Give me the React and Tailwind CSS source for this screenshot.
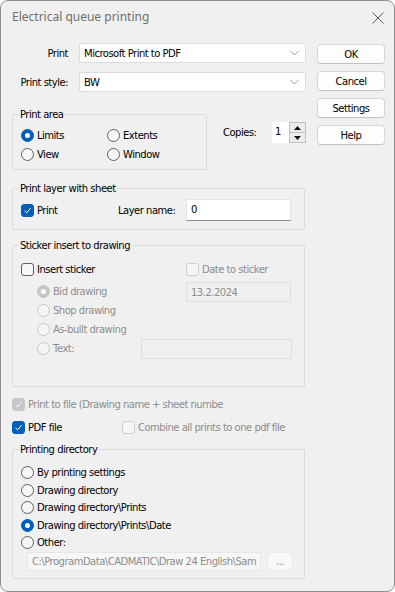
import React from 'react'

function Radio({ checked, disabled, label, className = '' }) {
  let circle = 'border-[#5f5f5f] bg-[#f7f7f7]'
  if (checked && !disabled) circle = 'border-[#005fb8] bg-[#005fb8]'
  if (checked && disabled) circle = 'border-[#c6c6c6] bg-[#c6c6c6]'
  if (!checked && disabled) circle = 'border-[#c6c6c6] bg-[#f5f5f5]'
  return (
    <div className={`flex items-center ${className}`}>
      <span
        className={`w-[13px] h-[13px] shrink-0 rounded-full border flex items-center justify-center ${circle}`}
      >
        {checked && <span className="w-[5px] h-[5px] rounded-full bg-white" />}
      </span>
      <span className={`ml-[3px] whitespace-nowrap ${disabled ? 'text-[#8d8d8d]' : ''}`}>
        {label}
      </span>
    </div>
  )
}

function Check({ checked, disabled, label, className = '' }) {
  let box = 'border-[#5f5f5f] bg-[#f7f7f7]'
  if (checked && !disabled) box = 'border-[#005fb8] bg-[#005fb8]'
  if (checked && disabled) box = 'border-[#c6c6c6] bg-[#c6c6c6]'
  if (!checked && disabled) box = 'border-[#cfcfcf] bg-[#f5f5f5]'
  return (
    <div className={`flex items-center ${className}`}>
      <span
        className={`w-[13px] h-[13px] shrink-0 rounded-[3px] border flex items-center justify-center ${box}`}
      >
        {checked && (
          <svg width="9" height="9" viewBox="0 0 9 9">
            <path d="M1.5 4.8 L3.6 6.8 L7.6 2.2" fill="none" stroke="white" strokeWidth="1" />
          </svg>
        )}
      </span>
      <span className={`ml-[3px] whitespace-nowrap ${disabled ? 'text-[#8d8d8d]' : ''}`}>
        {label}
      </span>
    </div>
  )
}

function Combo({ value }) {
  return (
    <div className="ml-[11px] w-[227px] h-[20px] bg-white border border-[#dcdcdc] rounded-[2px] flex items-center justify-between pl-[4px] pr-[6px]">
      <span>{value}</span>
      <svg width="9" height="6" viewBox="0 0 9 6">
        <polyline points="0.5,1 4.5,5 8.5,1" fill="none" stroke="#9a9a9a" strokeWidth="1" />
      </svg>
    </div>
  )
}

function Button({ children }) {
  return (
    <div className="w-[68px] h-[20px] bg-[#fdfdfd] border border-[#d6d6d6] border-b-[#c2c2c2] rounded-[4px] flex items-center justify-center">
      {children}
    </div>
  )
}

function Group({ title, className = '', children }) {
  return (
    <fieldset className={`border border-[#dadada] rounded-[2px] px-[8px] ${className}`}>
      <legend className="ml-[-2px] px-[1px] leading-[13px]">{title}</legend>
      {children}
    </fieldset>
  )
}

export default function App() {
  return (
    <div className="w-[395px] h-[592px] bg-white">
      <div className="w-[395px] h-[592px] border border-[#8f8f8f] rounded-[8px] bg-[#f0f0f0] overflow-hidden text-[10px] tracking-[-0.5px] text-black font-['DejaVu_Sans',sans-serif]">
        {/* Title bar */}
        <div className="h-[31px] flex items-center justify-between pl-[11px] pr-[10px]">
          <span className="font-['Noto_Sans',sans-serif] text-[12px] tracking-normal text-[#6f6f6f] mt-[1px]">
            Electrical queue printing
          </span>
          <svg width="12" height="12" viewBox="0 0 12 12" className="mt-[2px]">
            <path d="M0.5 0.5 L11.5 11.5 M11.5 0.5 L0.5 11.5" stroke="#5a5a5a" strokeWidth="1" />
          </svg>
        </div>

        <div className="flex">
          {/* Left column */}
          <div className="ml-[11px] w-[294px]">
            <div className="mt-[11px] flex items-center h-[20px]">
              <span className="w-[56px] text-right">Print</span>
              <Combo value="Microsoft Print to PDF" />
            </div>
            <div className="mt-[9px] flex items-center h-[20px]">
              <span className="w-[56px] text-right">Print style:</span>
              <Combo value="BW" />
            </div>

            {/* Print area + copies */}
            <div className="mt-[16px] flex items-start">
              <Group title="Print area" className="w-[195px] pt-[5px] pb-[5px]">
                <div className="flex h-[19px] items-center">
                  <Radio checked label="Limits" className="w-[86px]" />
                  <Radio label="Extents" />
                </div>
                <div className="flex h-[19px] items-center">
                  <Radio label="View" className="w-[86px]" />
                  <Radio label="Window" />
                </div>
              </Group>
              <div className="ml-[16px] mt-[14px] flex items-center">
                <span className="w-[49px]">Copies:</span>
                <div className="w-[17px] h-[21px] bg-white pl-[3px] pt-[3px] leading-[13px]">1</div>
                <div className="w-[17px] h-[21px] flex flex-col border border-[#bfbfbf] bg-[#d9d9d9]">
                  <div className="flex-1 flex items-center justify-center bg-[#ececec] border-b border-[#bfbfbf]">
                    <svg width="7" height="4" viewBox="0 0 7 4">
                      <polygon points="3.5,0 7,4 0,4" fill="#111" />
                    </svg>
                  </div>
                  <div className="flex-1 flex items-center justify-center bg-[#ececec]">
                    <svg width="7" height="4" viewBox="0 0 7 4">
                      <polygon points="0,0 7,0 3.5,4" fill="#111" />
                    </svg>
                  </div>
                </div>
              </div>
            </div>

            {/* Print layer with sheet */}
            <Group title="Print layer with sheet" className="mt-[12px] w-[293px] pt-[4px] pb-[8px]">
              <div className="flex items-center h-[22px]">
                <Check checked label="Print" className="w-[97px]" />
                <span className="w-[68px]">Layer name:</span>
                <div className="w-[105px] h-[22px] bg-white border border-[#e2e2e2] border-b-[#8a8a8a] pl-[4px] pt-[3px] leading-[13px]">
                  0
                </div>
              </div>
            </Group>

            {/* Sticker insert to drawing */}
            <Group title="Sticker insert to drawing" className="mt-[9px] w-[293px] pt-[7px] pb-[28px]">
              <div className="flex items-center h-[20px]">
                <Check label="Insert sticker" className="w-[165px]" />
                <Check disabled label="Date to sticker" />
              </div>
              <div className="mt-[3px] ml-[16px]">
                <div className="flex items-center h-[19px]">
                  <Radio checked disabled label="Bid drawing" className="w-[149px]" />
                  <div className="w-[105px] h-[20px] border border-[#dedede] pl-[4px] pt-[3px] leading-[13px] text-[#8d8d8d]">
                    13.2.2024
                  </div>
                </div>
                <div className="flex items-center h-[19px]">
                  <Radio disabled label="Shop drawing" />
                </div>
                <div className="flex items-center h-[19px]">
                  <Radio disabled label="As-built drawing" />
                </div>
                <div className="flex items-center h-[19px]">
                  <Radio disabled label="Text:" className="w-[104px]" />
                  <div className="w-[151px] h-[20px] border border-[#dedede]" />
                </div>
              </div>
            </Group>

            <div className="mt-[8px] flex items-center h-[18px]">
              <Check checked disabled label="Print to file (Drawing name + sheet numbe" />
            </div>
            <div className="mt-[5px] flex items-center h-[18px]">
              <Check checked label="PDF file" className="w-[110px]" />
              <Check disabled label="Combine all prints to one pdf file" />
            </div>

            {/* Printing directory */}
            <Group title="Printing directory" className="mt-[7px] w-[293px] pt-[8px] pb-[7px]">
              <div className="flex items-center h-[17.5px]">
                <Radio label="By printing settings" />
              </div>
              <div className="flex items-center h-[17.5px]">
                <Radio label="Drawing directory" />
              </div>
              <div className="flex items-center h-[17.5px]">
                <Radio label="Drawing directory\Prints" />
              </div>
              <div className="flex items-center h-[17.5px]">
                <Radio checked label="Drawing directory\Prints\Date" />
              </div>
              <div className="flex items-center h-[17.5px]">
                <Radio label="Other:" />
              </div>
              <div className="flex items-center h-[19px] ml-[6px] mt-[0.5px]">
                <div className="w-[234px] h-[19px] bg-[#f6f6f6] border border-[#e6e6e6] pl-[4px] flex items-center overflow-hidden whitespace-nowrap text-[#8d8d8d]">
                  C:\ProgramData\CADMATIC\Draw 24 English\Sam
                </div>
                <div className="ml-[6px] w-[26px] h-[19px] bg-[#f8f8f8] border border-[#ebebeb] rounded-[3px] flex items-center justify-center text-[#9a9a9a]">
                  ...
                </div>
              </div>
            </Group>
          </div>

          {/* Right column buttons */}
          <div className="ml-[11px] mt-[12px] flex flex-col gap-[7px]">
            <Button>OK</Button>
            <Button>Cancel</Button>
            <Button>Settings</Button>
            <Button>Help</Button>
          </div>
        </div>
      </div>
    </div>
  )
}
